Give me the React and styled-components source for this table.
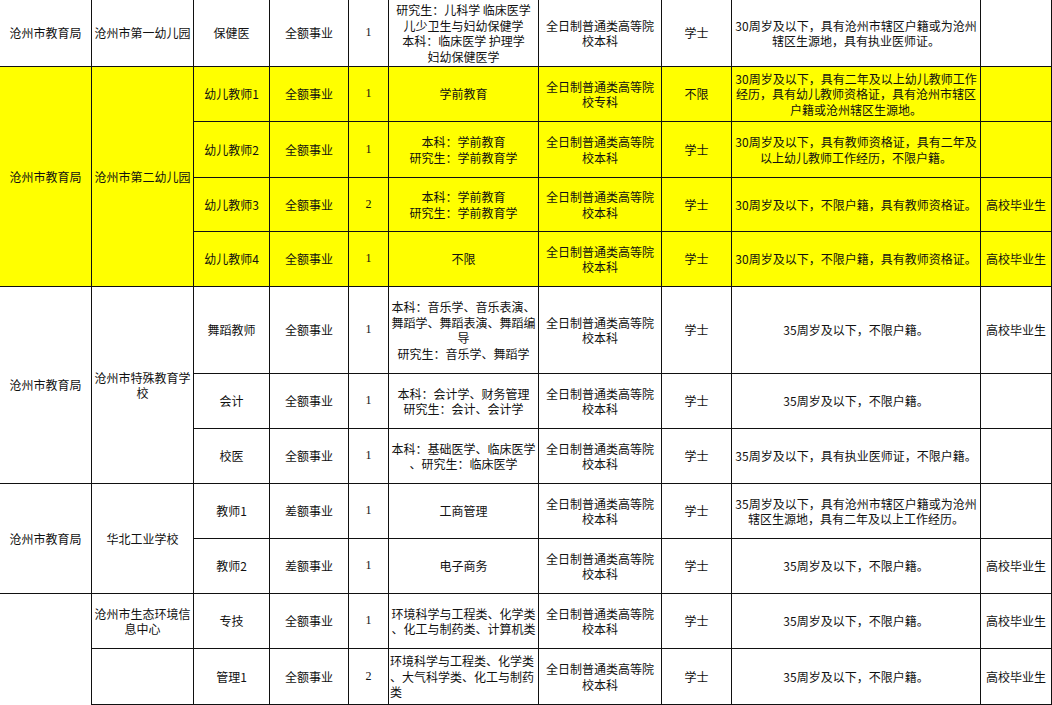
import React from "react";
import styled, { createGlobalStyle } from "styled-components";

const Global = createGlobalStyle`
  html, body {
    margin: 0;
    padding: 0;
    background: #ffffff;
    overflow: hidden;
  }
  body {
    font-family: "Noto Sans CJK SC", "Noto Sans", sans-serif;
    color: #111;
  }
`;

const Sheet = styled.div`
  display: grid;
  grid-template-columns: 92px 102px 76px 79px 40px 150px 123px 70px 249px 71px;
  grid-template-rows: 67px 55px 56px 54px 55px 87px 55px 55px 55px 55px 55px 56px;
  width: 1052px;
  background: #ffffff;
`;

const Cell = styled.div`
  grid-column: ${(p) => p.$col};
  grid-row: ${(p) => p.$row} / span ${(p) => p.$span || 1};
  box-sizing: border-box;
  border-right: 1px solid #111;
  border-bottom: ${(p) => (p.$noBottom ? "none" : "1px solid #111")};
  background: ${(p) => (p.$yellow ? "#ffff00" : "#ffffff")};
  display: flex;
  flex-direction: column;
  justify-content: center;
  align-items: ${(p) => (p.$left ? "flex-start" : "center")};
  text-align: ${(p) => (p.$left ? "left" : "center")};
  padding: 0 1px;
  font-family: ${(p) =>
    p.$serif
      ? '"Liberation Serif", "Noto Sans CJK SC", serif'
      : '"Noto Sans CJK SC", "Noto Sans", sans-serif'};
  font-size: 12px;
  line-height: 15.5px;
  color: #111;
  overflow: hidden;
`;

const Line = styled.span`
  display: block;
  white-space: nowrap;
`;

const A = "全日制普通类高等院";
const AGE35 = "35周岁及以下，不限户籍。";
const AGE30 = "30周岁及以下，不限户籍，具有教师资格证。";

const cells = [
  // column 1: 主管部门
  { c: 1, r: 1, t: "沧州市教育局" },
  { c: 1, r: 2, s: 4, t: "沧州市教育局", y: true },
  { c: 1, r: 6, s: 3, t: "沧州市教育局" },
  { c: 1, r: 9, s: 2, t: "沧州市教育局" },
  { c: 1, r: 11, s: 2, t: "", nb: true },
  // column 2: 单位
  { c: 2, r: 1, t: "沧州市第一幼儿园" },
  { c: 2, r: 2, s: 4, t: "沧州市第二幼儿园", y: true },
  { c: 2, r: 6, s: 3, t: ["沧州市特殊教育学", "校"] },
  { c: 2, r: 9, s: 2, t: "华北工业学校" },
  { c: 2, r: 11, t: ["沧州市生态环境信", "息中心"] },
  { c: 2, r: 12, t: "" },
];

const rows = [
  {
    post: "保健医", fund: "全额事业", n: "1",
    major: ["研究生：儿科学 临床医学", "儿少卫生与妇幼保健学", "本科：临床医学 护理学", "妇幼保健医学"],
    edu: [A, "校本科"], deg: "学士",
    cond: ["30周岁及以下，具有沧州市辖区户籍或为沧州", "辖区生源地，具有执业医师证。"],
    note: "",
  },
  {
    post: "幼儿教师1", fund: "全额事业", n: "1", y: true,
    major: "学前教育", edu: [A, "校专科"], deg: "不限",
    cond: ["30周岁及以下，具有二年及以上幼儿教师工作", "经历，具有幼儿教师资格证，具有沧州市辖区", "户籍或沧州辖区生源地。"],
    note: "",
  },
  {
    post: "幼儿教师2", fund: "全额事业", n: "1", y: true,
    major: ["本科：学前教育", "研究生：学前教育学"], edu: [A, "校本科"], deg: "学士",
    cond: ["30周岁及以下，具有教师资格证，具有二年及", "以上幼儿教师工作经历，不限户籍。"],
    note: "",
  },
  {
    post: "幼儿教师3", fund: "全额事业", n: "2", y: true,
    major: ["本科：学前教育", "研究生：学前教育学"], edu: [A, "校本科"], deg: "学士",
    cond: AGE30, note: "高校毕业生",
  },
  {
    post: "幼儿教师4", fund: "全额事业", n: "1", y: true,
    major: "不限", edu: [A, "校本科"], deg: "学士",
    cond: AGE30, note: "高校毕业生",
  },
  {
    post: "舞蹈教师", fund: "全额事业", n: "1",
    major: ["本科：音乐学、音乐表演、", "舞蹈学、舞蹈表演、舞蹈编", "导", "研究生：音乐学、舞蹈学"],
    edu: [A, "校本科"], deg: "学士", cond: AGE35, note: "高校毕业生",
  },
  {
    post: "会计", fund: "全额事业", n: "1",
    major: ["本科：会计学、财务管理", "研究生：会计、会计学"],
    edu: [A, "校本科"], deg: "学士", cond: AGE35, note: "",
  },
  {
    post: "校医", fund: "全额事业", n: "1",
    major: ["本科：基础医学、临床医学", "、研究生：临床医学"],
    edu: [A, "校本科"], deg: "学士",
    cond: "35周岁及以下，具有执业医师证，不限户籍。", note: "",
  },
  {
    post: "教师1", fund: "差额事业", n: "1",
    major: "工商管理", edu: [A, "校本科"], deg: "学士",
    cond: ["35周岁及以下，具有沧州市辖区户籍或为沧州", "辖区生源地，具有二年及以上工作经历。"],
    note: "",
  },
  {
    post: "教师2", fund: "差额事业", n: "1",
    major: "电子商务", edu: [A, "校本科"], deg: "学士", cond: AGE35, note: "高校毕业生",
  },
  {
    post: "专技", fund: "全额事业", n: "1",
    major: ["环境科学与工程类、化学类", "、化工与制药类、计算机类"],
    edu: [A, "校本科"], deg: "学士", cond: AGE35, note: "高校毕业生",
  },
  {
    post: "管理1", fund: "全额事业", n: "2",
    major: ["环境科学与工程类、化学类", "、大气科学类、化工与制药", "类"], majorLeft: true,
    edu: [A, "校本科"], deg: "学士", cond: AGE35, note: "高校毕业生",
  },
];

rows.forEach((row, i) => {
  const r = i + 1;
  const y = row.y;
  cells.push({ c: 3, r, t: row.post, y });
  cells.push({ c: 4, r, t: row.fund, y });
  cells.push({ c: 5, r, t: row.n, y, serif: true });
  cells.push({ c: 6, r, t: row.major, y, left: row.majorLeft });
  cells.push({ c: 7, r, t: row.edu, y });
  cells.push({ c: 8, r, t: row.deg, y });
  cells.push({ c: 9, r, t: row.cond, y });
  cells.push({ c: 10, r, t: row.note, y });
});

function Text({ value }) {
  const lines = Array.isArray(value) ? value : [value];
  return lines.map((l, k) => <Line key={k}>{l}</Line>);
}

export default function App() {
  return (
    <>
      <Global />
      <Sheet>
        {cells.map((cell, i) => (
          <Cell
            key={i}
            $col={cell.c}
            $row={cell.r}
            $span={cell.s}
            $yellow={cell.y}
            $serif={cell.serif}
            $left={cell.left}
            $noBottom={cell.nb}
          >
            <Text value={cell.t} />
          </Cell>
        ))}
      </Sheet>
    </>
  );
}
